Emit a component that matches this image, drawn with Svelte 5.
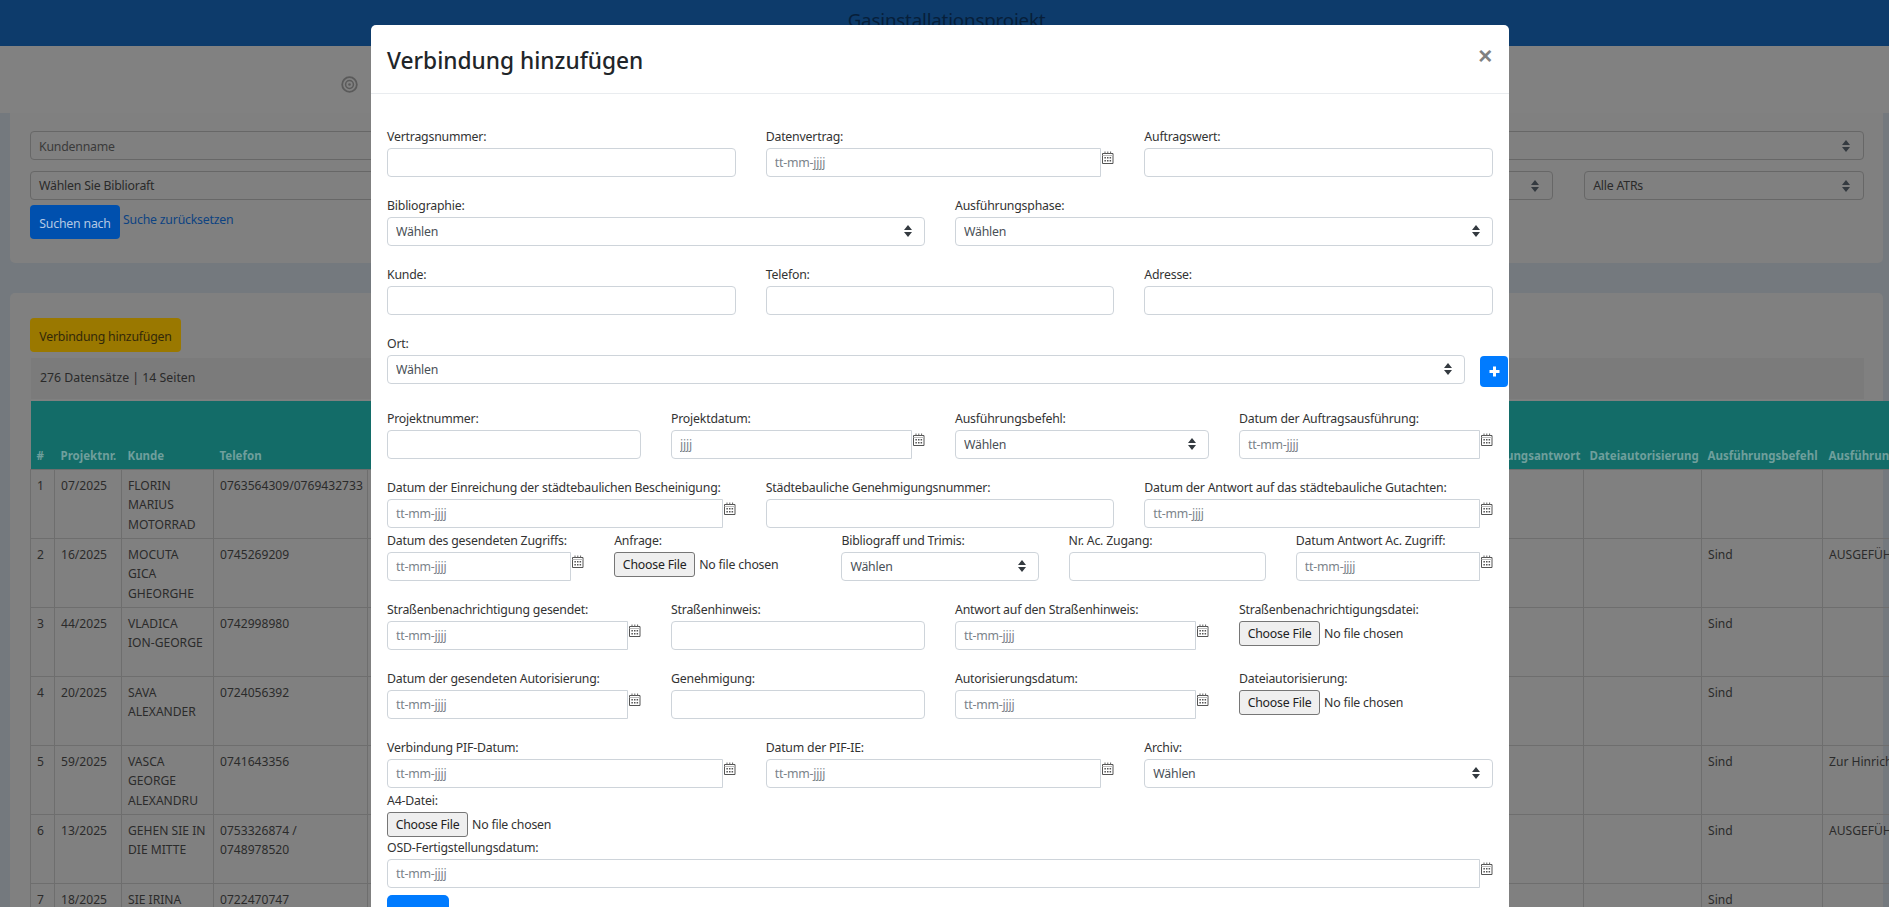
<script>
  const rows = [
    { n: 3, gap: 18, f: [['Vertragsnummer:', 't'], ['Datenvertrag:', 'd'], ['Auftragswert:', 't']] },
    { n: 2, gap: 18, f: [['Bibliographie:', 's'], ['Ausführungsphase:', 's']] },
    { n: 3, gap: 18, f: [['Kunde:', 't'], ['Telefon:', 't'], ['Adresse:', 't']] },
    { n: 1, gap: 21, f: [['Ort:', 'o']] },
    { n: 4, gap: 18, f: [['Projektnummer:', 't'], ['Projektdatum:', 'y'], ['Ausführungsbefehl:', 's'], ['Datum der Auftragsausführung:', 'd']] },
    { n: 3, gap: 2, f: [['Datum der Einreichung der städtebaulichen Bescheinigung:', 'd'], ['Städtebauliche Genehmigungsnummer:', 't'], ['Datum der Antwort auf das städtebauliche Gutachten:', 'd']] },
    { n: 5, gap: 18, f: [['Datum des gesendeten Zugriffs:', 'd'], ['Anfrage:', 'f'], ['Bibliograff und Trimis:', 's'], ['Nr. Ac. Zugang:', 't'], ['Datum Antwort Ac. Zugriff:', 'd']] },
    { n: 4, gap: 18, f: [['Straßenbenachrichtigung gesendet:', 'd'], ['Straßenhinweis:', 't'], ['Antwort auf den Straßenhinweis:', 'd'], ['Straßenbenachrichtigungsdatei:', 'f']] },
    { n: 4, gap: 18, f: [['Datum der gesendeten Autorisierung:', 'd'], ['Genehmigung:', 't'], ['Autorisierungsdatum:', 'd'], ['Dateiautorisierung:', 'f']] },
    { n: 3, gap: 2, f: [['Verbindung PIF-Datum:', 'd'], ['Datum der PIF-IE:', 'd'], ['Archiv:', 's']] },
    { n: 1, gap: 0, f: [['A4-Datei:', 'f']] },
    { n: 1, gap: 7, f: [['OSD-Fertigstellungsdatum:', 'd']] }
  ];
  const data = [
    ['1', '07/2025', 'FLORIN MARIUS MOTORRAD', '0763564309/0769432733', '', ''],
    ['2', '16/2025', 'MOCUTA GICA GHEORGHE', '0745269209', 'Sind', 'AUSGEFÜHRT'],
    ['3', '44/2025', 'VLADICA ION-GEORGE', '0742998980', 'Sind', ''],
    ['4', '20/2025', 'SAVA ALEXANDER', '0724056392', 'Sind', ''],
    ['5', '59/2025', 'VASCA GEORGE ALEXANDRU', '0741643356', 'Sind', 'Zur Hinrichtung geschickt'],
    ['6', '13/2025', 'GEHEN SIE IN DIE MITTE', '0753326874 / 0748978520', 'Sind', 'AUSGEFÜHRT'],
    ['7', '18/2025', 'SIE IRINA', '0722470747', 'Sind', '']
  ];
</script>

{#snippet arrows()}
  <svg class="arrows" width="8" height="12" viewBox="0 0 8 12" aria-hidden="true"><path d="M0 5 L4 0 L8 5Z M0 7 L4 12 L8 7Z" /></svg>
{/snippet}

{#snippet calendar()}
  <svg class="cal" width="13" height="13" viewBox="0 0 13 13" aria-hidden="true">
    <path d="M1.5 2.5h10.5v10H1.5z" fill="none" stroke="#555" stroke-width="1" />
    <path d="M1.5 4.5h10.5" stroke="#bbb" stroke-width="1" />
    <path d="M4 .5v2 M6.8 .5v2 M9.6 .5v2" stroke="#666" stroke-width="1" />
    <path d="M3.4 6h1.5v1.4H3.4z M6 6h1.5v1.4H6z M8.6 6h1.5v1.4H8.6z M3.4 9h1.5v1.4H3.4z M6 9h1.5v1.4H6z M8.6 9h1.5v1.4H8.6z" fill="#555" />
  </svg>
{/snippet}

<div class="page">
  <header class="top"><h1>Gasinstallationsprojekt</h1></header>
  <nav class="nav">
    <svg width="17" height="17" viewBox="0 0 17 17" aria-hidden="true"><circle cx="8.5" cy="8.5" r="7.3" fill="none" stroke="#5a5a5a" stroke-width="1.8" /><circle cx="8.5" cy="8.5" r="3.9" fill="none" stroke="#5a5a5a" stroke-width="1.5" /><circle cx="8.5" cy="8.5" r="1.3" fill="#5a5a5a" /></svg>
  </nav>

  <section class="card search">
    <div class="sgrid">
      <input class="bgc half" placeholder="Kundenname" />
      <div class="bgsel half"><span>Alle</span>{@render arrows()}</div>
      <div class="bgsel half"><span>Wählen Sie Biblioraft</span>{@render arrows()}</div>
      <div class="bgsel two"><span>Alle</span>{@render arrows()}</div>
      <div class="bgsel"><span>Alle ATRs</span>{@render arrows()}</div>
    </div>
    <div class="actions">
      <button class="find">Suchen nach</button>
      <a href="#top" class="reset">Suche zurücksetzen</a>
    </div>
  </section>

  <section class="card list">
    <button class="add">Verbindung hinzufügen</button>
    <div class="count">276 Datensätze | 14 Seiten</div>
    <table>
      <colgroup>
        <col style="width:24px" /><col style="width:67px" /><col style="width:92px" /><col style="width:154px" />
        <col style="width:1075px" /><col style="width:141px" /><col style="width:118px" /><col style="width:121px" /><col style="width:200px" />
      </colgroup>
      <thead>
        <tr>
          <th>#</th><th>Projektnr.</th><th>Kunde</th><th>Telefon</th><th></th>
          <th>Autorisierungsantwort</th><th>Dateiautorisierung</th><th>Ausführungsbefehl</th><th>Ausführungsphase</th>
        </tr>
      </thead>
      <tbody>
        {#each data as r}
          <tr>
            <td>{r[0]}</td><td>{r[1]}</td><td>{r[2]}</td><td>{r[3]}</td><td class="wide"></td><td class="wide"></td><td></td><td>{r[4]}</td><td>{r[5]}</td>
          </tr>
        {/each}
      </tbody>
    </table>
  </section>

  <div class="layer">
    <div class="modal">
      <div class="mhead">
        <h2>Verbindung hinzufügen</h2>
        <span class="close">×</span>
      </div>
      <form class="mbody">
        {#each rows as row}
          <div class="frow n{row.n}" style="margin-bottom:{row.gap}px">
            {#each row.f as [label, type]}
              <div class="field">
                <label>{label}</label>
                {#if type === 't'}
                  <input type="text" />
                {:else if type === 'd' || type === 'y'}
                  <div class="date">
                    <input type="text" placeholder={type === 'y' ? 'jjjj' : 'tt-mm-jjjj'} />
                    {@render calendar()}
                  </div>
                {:else if type === 's'}
                  <div class="sel"><select><option>Wählen</option></select>{@render arrows()}</div>
                {:else if type === 'o'}
                  <div class="ort">
                    <div class="sel"><select><option>Wählen</option></select>{@render arrows()}</div>
                    <button type="button" class="plus" aria-label="Hinzufügen">
                      <svg width="11" height="11" viewBox="0 0 11 11"><path d="M5.5 0.5v10 M0.5 5.5h10" stroke="#fff" stroke-width="3" /></svg>
                    </button>
                  </div>
                {:else}
                  <input class="file" type="file" />
                {/if}
              </div>
            {/each}
          </div>
        {/each}
        <button type="button" class="submit" aria-label="Speichern"></button>
      </form>
    </div>
  </div>
</div>

<style>
  :global(body) { margin: 0; background: #74797e; }
  .page {
    position: relative; width: 1889px; height: 907px; overflow: hidden;
    background: #74797e; color: #2a2a2a;
    font-family: "Noto Sans", "Open Sans", sans-serif; font-size: 12.3px; letter-spacing: -0.2px;
  }
  .top { height: 46px; background: #0d3b6b; box-sizing: border-box; text-align: center; padding-left: 4px; }
  .top h1 { margin: 0; font-size: 18.8px; font-weight: 400; line-height: 40px; color: #071f3a; }
  .nav { height: 67px; background: #818181; box-sizing: border-box; padding: 30px 0 0 341px; }
  .nav svg { display: block; }
  .card { margin: 0 6px 0 10px; background: #808080; border-radius: 0 0 5px 5px; box-sizing: border-box; }
  .search { height: 150px; padding: 18px 19px 0 20px; }
  .sgrid { display: grid; grid-template-columns: repeat(6, 1fr); gap: 11px 31px; }
  .half { grid-column: span 3; }
  .two { grid-column: span 2; }
  .bgc, .bgsel {
    height: 29px; box-sizing: border-box; width: 100%; border: 1px solid #676767; border-radius: 4px;
    background: #808080; padding: 0 8px; font: inherit; letter-spacing: inherit; color: #2a2a2a; display: flex; align-items: center; position: relative;
  }
  .bgc { padding-top: 1px; }
  .bgc::placeholder { color: #3a3a3a; }
  .actions { display: flex; align-items: flex-start; gap: 3px; margin-top: 5px; }
  .find {
    width: 90px; height: 34px; border: 0; border-radius: 4px; background: #0050ae; color: #b4c8e4;
    font: inherit; letter-spacing: inherit; padding: 3px 0 0;
  }
  .reset { color: #0d4382; text-decoration: none; margin-top: 6px; line-height: 18px; }
  .list { margin-top: 30px; height: 620px; border-radius: 5px 5px 0 0; padding: 25px 0 0 20px; }
  .add {
    display: block; width: 151px; height: 34px; border: 0; border-radius: 4px; background: #9a7800; color: #33290a;
    font: inherit; letter-spacing: inherit; padding: 2px 0 0; margin-bottom: 6px;
  }
  .count {
    margin: 0 19px 2px 1px; height: 41px; box-sizing: border-box; background: #7b7b7b; padding: 0 9px;
    line-height: 40px; color: #2a2a2a; letter-spacing: 0;
  }
  table { margin-left: 0; border-collapse: collapse; table-layout: fixed; width: 1992px; font-size: 12.1px; letter-spacing: 0; }
  thead tr { height: 68px; background: #136c68; }
  th { color: #6f9f9c; font-weight: 700; font-size: 11.5px; text-align: left; vertical-align: bottom; padding: 0 0 6px 6px; white-space: nowrap; overflow: visible; }
  td { height: 69px; box-sizing: border-box; vertical-align: top; padding: 6px 6px 0; line-height: 19.5px; border: 1px solid #6e6e6e; color: #2b2b2b; }
  td.wide { border-left: 0; border-right: 0; }

  .layer { position: absolute; inset: 0; padding: 25px 0 0 371px; }
  .modal { width: 1138px; background: #fff; border-radius: 5px; color: #212529; }
  .mhead { height: 68px; border-bottom: 1px solid #e9ecef; position: relative; padding: 0 16px; }
  .mhead h2 { margin: 0; font-size: 22.7px; font-weight: 500; line-height: 72px; color: #212529; letter-spacing: 0; }
  .close { position: absolute; right: 17px; top: 11px; font-size: 24px; line-height: 40px; font-weight: 700; color: #808080; font-family: "Liberation Sans", sans-serif; }
  .mbody { padding: 32px 16px 0; }
  .frow { display: grid; gap: 30px; }
  .n1 { grid-template-columns: 1fr; }
  .n2 { grid-template-columns: repeat(2, 1fr); }
  .n3 { grid-template-columns: repeat(3, 1fr); }
  .n4 { grid-template-columns: repeat(4, 1fr); }
  .n5 { grid-template-columns: repeat(5, 1fr); }
  .field { min-width: 0; }
  label { display: block; height: 22px; line-height: 21px; white-space: nowrap; color: #333; }
  input[type="text"], select {
    display: block; width: 100%; height: 29px; box-sizing: border-box; border: 1px solid #ced4da; border-radius: 4px;
    padding: 0 8px; background: #fff; font: inherit; letter-spacing: inherit; color: #495057; appearance: none; min-width: 0;
  }
  input::placeholder { color: #7b838a; }
  .date { display: flex; align-items: flex-start; }
  .date input[type="text"] { flex: 1; border-radius: 4px 0 0 4px; }
  .cal { flex: none; margin: 3px 0 0 0; }
  .sel { position: relative; flex: 1; }
  .arrows { position: absolute; right: 13px; top: 8px; fill: #343a40; }
  .ort { display: flex; align-items: flex-start; gap: 15px; margin-right: -15px; }
  .plus {
    flex: none; width: 28px; height: 31px; margin-top: 1px; border: 0; border-radius: 4px; background: #007bff;
    display: flex; align-items: center; justify-content: center; padding: 0;
  }
  .file { display: block; width: 100%; height: 25px; font: inherit; letter-spacing: inherit; color: #333; }
  .file::file-selector-button {
    width: 81px; height: 25px; margin-right: 4px; padding: 0; background: #efefef; border: 1px solid #767676; border-radius: 3px;
    font: inherit; letter-spacing: inherit; color: #222;
  }
  .submit { display: block; width: 62px; height: 40px; border: 0; border-radius: 5px; background: #007bff; }
</style>
